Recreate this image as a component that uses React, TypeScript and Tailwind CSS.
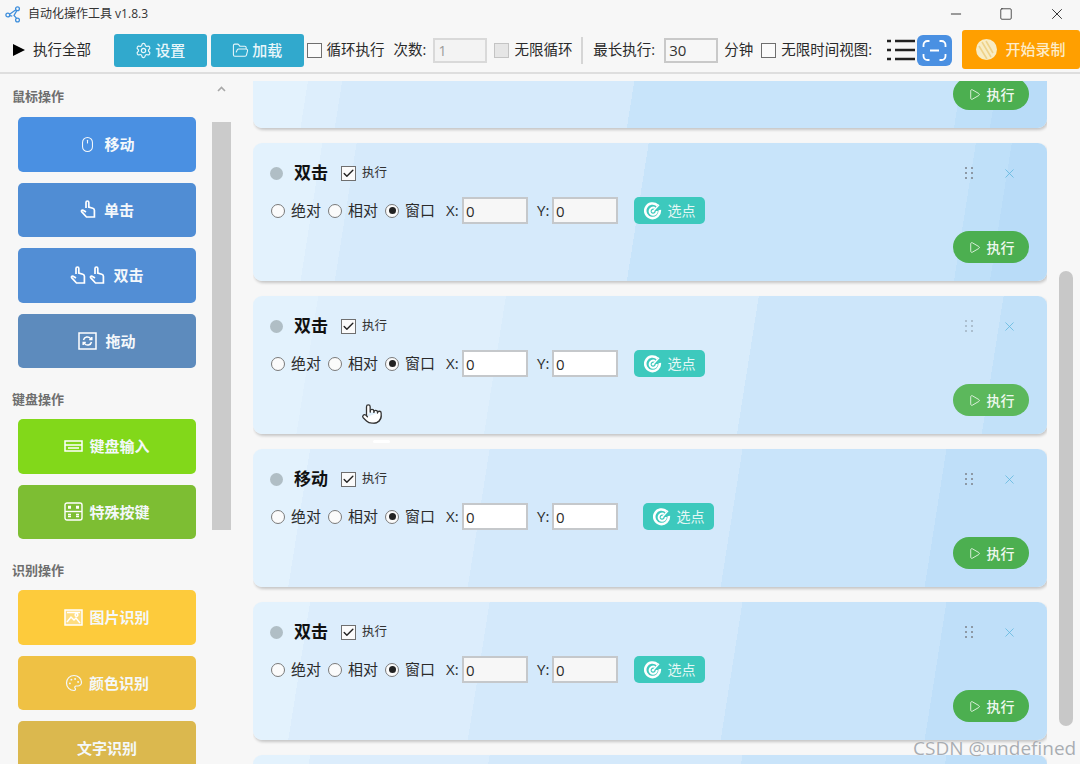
import type { ReactNode } from 'react'
import { Check, FolderOpen, Minus, Mouse, Palette, Play, Pointer, Settings, Square, X } from 'lucide-react'

const hand = (flip = false) => (
  <svg width="16" height="19" viewBox="0 0 16 19" fill="none" stroke="white" strokeWidth="1.7" className={flip ? '-scale-x-100' : ''}>
    <path d="M6 8V2.4a1.4 1.4 0 0 1 2.8 0V7l4 1.2c1 .3 1.6 1 1.6 2V17H6.5L1.6 11.6c-.6-.8.4-2 1.5-1.4L6 12" />
  </svg>
)

function KeyboardIcon() {
  return (
    <svg width="19" height="12" viewBox="0 0 19 12" fill="none" stroke="white" strokeWidth="1.5">
      <rect x="1" y="1" width="17" height="10" />
      <path d="M1 5h17M4 8h11" />
    </svg>
  )
}

function KeysIcon() {
  return (
    <svg width="19" height="19" viewBox="0 0 19 19" fill="none" stroke="white" strokeWidth="1.4">
      <rect x="1" y="1" width="17" height="17" rx="2" />
      <path d="M1 9.5h17" />
      <path d="M4 6h3M4 4.5h3M12 6h3M12 4.5h3M4 12.5h3M4 14.5h3M12 12.5h3M12 14.5h3" strokeWidth="1.3" />
    </svg>
  )
}

function ImageIcon() {
  return (
    <svg width="19" height="17" viewBox="0 0 19 17" fill="none" stroke="white" strokeWidth="1.5">
      <rect x="1" y="1" width="17" height="15" fill="white" fillOpacity="0.35" />
      <path d="M3 13l4-5 3 3 2-2 4 5M3 3.5h13" />
      <circle cx="12.5" cy="6" r="1.4" />
    </svg>
  )
}

function DragIcon() {
  return (
    <svg width="19" height="18" viewBox="0 0 19 18" fill="none" stroke="white" strokeWidth="1.5">
      <rect x="1" y="1" width="17" height="16" />
      <path d="M5.5 8a4 4 0 0 1 7-1.6l1 1M13.5 10a4 4 0 0 1-7 1.6l-1-1" />
      <path d="M13.8 5v2.6h-2.6M5.2 13v-2.6h2.6" />
    </svg>
  )
}

function TargetIcon() {
  return (
    <svg width="18" height="18" viewBox="0 0 18 18" fill="none" stroke="white">
      <path d="M13.5 3.4A7.3 7.3 0 1 0 15.8 8" strokeWidth="2.6" />
      <path d="M10.8 6a3.6 3.6 0 1 0 2 3" strokeWidth="2" />
      <circle cx="9" cy="9.2" r="1.2" fill="white" stroke="none" />
      <path d="M9 9.2l6-6.4" strokeWidth="1.5" />
    </svg>
  )
}

function Grip({ faded }: { faded?: boolean }) {
  return (
    <div className={`grid grid-cols-2 gap-x-[4px] gap-y-[3px] ${faded ? 'opacity-50' : ''}`}>
      {[0, 1, 2, 3, 4, 5].map(i => (
        <span key={i} className="h-[2px] w-[2px] bg-[#8d99a6]" />
      ))}
    </div>
  )
}

function CheckBox({ checked, disabled }: { checked?: boolean; disabled?: boolean }) {
  return (
    <span
      className={`flex h-[15px] w-[15px] shrink-0 items-center justify-center border ${
        disabled ? 'border-[#c4c4c4] bg-[#e6e6e6]' : 'border-[#6f6f6f] bg-[#fbfbfb]'
      }`}
    >
      {checked && <Check size={13} strokeWidth={2.6} className="text-[#222]" />}
    </span>
  )
}

function Radio({ checked }: { checked?: boolean }) {
  return (
    <span className="flex h-[14px] w-[14px] shrink-0 items-center justify-center rounded-full border border-[#7a7a7a] bg-[#fbfbfb]">
      {checked && <span className="h-[7px] w-[7px] rounded-full bg-[#222]" />}
    </span>
  )
}

function SideBtn({ color, icon, label, gap = 'gap-2' }: { color: string; icon?: ReactNode; label: string; gap?: string }) {
  return (
    <div className={`ml-[18px] flex h-[54.5px] w-[178px] shrink-0 items-center justify-center rounded-[5px] text-[15px] font-semibold text-[#f4f8fb] ${gap} ${color}`}>
      {icon}
      <span>{label}</span>
    </div>
  )
}

function SideTitle({ children, className }: { children: ReactNode; className: string }) {
  return <div className={`pl-[12px] text-[13px] leading-[18px] font-semibold text-[#6e6e6e] ${className}`}>{children}</div>
}

type CardProps = {
  title: string
  band: string
  shift?: boolean
  field?: string
  run?: string
  fade?: boolean
}

function ActionCard({ title, band, shift, field = 'bg-white', run = 'bg-[#4caf50]', fade }: CardProps) {
  return (
    <div className={`flex h-[138px] w-[794px] shrink-0 flex-col rounded-[9px] pr-[18px] pl-[17px] shadow-[1px_2px_3px_rgba(0,0,0,0.2)] ${band}`}>
      <div className="mt-[22px] flex h-[16px] items-center">
        <span className="h-[13px] w-[13px] rounded-full bg-[#b0bec5]" />
        <span className="ml-[11px] w-[47px] text-[17px] font-bold text-[#111]">{title}</span>
        <CheckBox checked />
        <span className="ml-[6px] text-[12.5px] text-[#333]">执行</span>
        <div className="mr-[12px] ml-auto flex items-center gap-[29px]">
          <Grip faded={fade} />
          <X size={15} strokeWidth={1.2} className="text-[#5cb6dc]" />
        </div>
      </div>
      <div className="mt-[16px] flex h-[27px] items-center text-[15px] text-[#2b2b2b]">
        <span className="ml-px"><Radio /></span>
        <span className="ml-[6px] w-[37px]">绝对</span>
        <Radio />
        <span className="ml-[6px] w-[37px]">相对</span>
        <Radio checked />
        <span className="ml-[6px] w-[41px]">窗口</span>
        <span className="w-[16px]">X:</span>
        <input readOnly value="0" className={`h-[27px] w-[66px] border-2 border-[#c5c8cb] pl-[2px] text-[15px] outline-none ${field}`} />
        <span className="ml-[9px] w-[15px]">Y:</span>
        <input readOnly value="0" className={`h-[27px] w-[66px] border-2 border-[#c5c8cb] pl-[2px] text-[15px] outline-none ${field}`} />
        <div className={`flex h-[27px] w-[71px] items-center justify-center gap-[6px] rounded-[5px] bg-[#3dc9bd] text-[14px] text-[#e4f7f5] ${shift ? 'ml-[25px]' : 'ml-[16px]'}`}>
          <TargetIcon />
          选点
        </div>
      </div>
      <div className="mt-[7px] flex justify-end">
        <div className={`flex h-[32px] w-[76px] items-center justify-center gap-[6px] rounded-full text-[14px] font-medium text-[#eef8ee] ${run}`}>
          <Play size={13} strokeWidth={1.6} />
          执行
        </div>
      </div>
    </div>
  )
}

const bandA = 'bg-[linear-gradient(99deg,#e3f2fd_8.5%,#ddeefc_8.5%,#ddeefc_12.7%,#d6eafb_12.7%,#d6eafb_48.5%,#c8e4fa_48.5%,#c8e4fa_88.6%,#bfe0f9_88.6%,#bfe0f9_93%,#b9dcf8_93%)]'
const bandB = 'bg-[linear-gradient(99deg,#e3f2fd_8%,#dfeffc_8%,#dfeffc_31%,#d9ecfb_31%,#d9ecfb_62%,#cde6fa_62%,#cde6fa_92%,#c2e1f9_92%)]'
const bandC = 'bg-[linear-gradient(99deg,#e3f2fd_7%,#dcedfc_7%,#dcedfc_29%,#d4e9fb_29%,#d4e9fb_60%,#c9e4fa_60%,#c9e4fa_85%,#bfdff9_85%)]'

export default function App() {
  return (
    <div className="relative flex h-[764px] w-[1080px] flex-col overflow-hidden bg-[#f7f7f7] [font-family:'Open_Sans','Noto_Sans_CJK_SC',sans-serif]">
      {/* title bar */}
      <div className="flex h-[28px] shrink-0 items-center pl-[5px] text-[12px] text-[#333]">
        <svg width="17" height="17" viewBox="0 0 17 17" fill="none" stroke="#3f8fdc" strokeWidth="1.3">
          <circle cx="2.8" cy="9" r="1.9" />
          <circle cx="12.5" cy="2.8" r="1.9" />
          <circle cx="12.5" cy="14" r="1.9" />
          <path d="M4.6 8.2l6.3-4.4M4.7 9.6l2.6.6M11.8 4.6L9 9.4l2.6 3" />
        </svg>
        <span className="ml-[6px]">自动化操作工具 v1.8.3</span>
        <div className="ml-auto flex items-center gap-[35px] pr-[14px] text-[#222]">
          <Minus size={16} strokeWidth={1.3} />
          <Square size={14} strokeWidth={1.3} />
          <X size={18} strokeWidth={1.2} />
        </div>
      </div>

      {/* toolbar */}
      <div className="flex h-[46px] shrink-0 items-center border-b-2 border-[#dedede] text-[14.5px] text-[#2a2a2a]">
        <span className="ml-[13px] h-0 w-0 border-y-[6.5px] border-l-[12px] border-y-transparent border-l-black" />
        <span className="ml-[8px] w-[81px]">执行全部</span>
        <div className="flex h-[33px] w-[93px] items-center justify-center gap-[3px] rounded-[3px] bg-[#31a9cd] text-[15px] font-medium text-[#e8f6fa]">
          <Settings size={17} strokeWidth={1.7} />
          设置
        </div>
        <div className="ml-[4px] flex h-[33px] w-[93px] items-center justify-center gap-[3px] rounded-[3px] bg-[#31a9cd] text-[15px] font-medium text-[#e8f6fa]">
          <FolderOpen size={17} strokeWidth={1.5} />
          加载
        </div>
        <span className="ml-[3px]"><CheckBox /></span>
        <span className="ml-[5px] w-[67px]">循环执行</span>
        <span className="w-[40px]">次数:</span>
        <input readOnly value="1" className="h-[25px] w-[54px] border-2 border-[#d9d9d9] bg-[#f3f3f3] pl-[3px] text-[14px] text-[#9a9a9a] outline-none" />
        <span className="ml-[7px]"><CheckBox disabled /></span>
        <span className="ml-[5px] w-[67px]">无限循环</span>
        <span className="h-[27px] w-[2px] bg-[#d5d5d5]" />
        <span className="ml-[10px] w-[71px]">最长执行:</span>
        <input readOnly value="30" className="h-[25px] w-[54px] border-2 border-[#c9c9c9] bg-[#f7f7f7] pl-[3px] text-[15px] text-[#333] outline-none" />
        <span className="ml-[6px] w-[37px]">分钟</span>
        <CheckBox />
        <span className="ml-[5px] w-[106px] whitespace-nowrap">无限时间视图:</span>
        <svg width="28" height="24" viewBox="0 0 28 24" fill="none" stroke="#222" strokeWidth="2.4" className="shrink-0">
          <path d="M8 3h20M8 12h20M8 21h20M0 3h4M0 12h4M0 21h4" />
        </svg>
        <div className="ml-[2px] flex h-[31px] w-[35px] shrink-0 items-center justify-center rounded-[6px] bg-[#4a90e2]">
          <svg width="25" height="23" viewBox="0 0 25 23" fill="none" stroke="white" strokeWidth="1.8">
            <path d="M1.5 8V6a4 4 0 0 1 4-4h2M17.5 2h2a4 4 0 0 1 4 4v2M23.5 15v2a4 4 0 0 1-4 4h-2M7.5 21h-2a4 4 0 0 1-4-4v-2M8 11.5h9" />
          </svg>
        </div>
        <div className="mb-[1px] ml-[10px] flex h-[39px] w-[118px] shrink-0 items-center justify-center gap-[8px] rounded-[3px] bg-[#ff9f00] text-[15px] font-medium text-[#fdecc8]">
          <svg width="21" height="21" viewBox="0 0 21 21">
            <circle cx="10.5" cy="10.5" r="10.5" fill="#f8ecc4" />
            <path d="M6 3l9 15M10 2l7 12M3 7l8 13" stroke="#eed28a" strokeWidth="1.6" />
          </svg>
          开始录制
        </div>
      </div>

      {/* body */}
      <div className="flex min-h-0 flex-1">
        <div className="flex w-[253px] shrink-0">
          <div className="flex w-[212px] shrink-0 flex-col overflow-hidden">
            <SideTitle className="mt-[13px] mb-[12px]">鼠标操作</SideTitle>
            <div className="flex flex-col gap-[11px]">
              <SideBtn color="bg-[#4a90e2]" icon={<Mouse size={17} strokeWidth={1.5} />} label="移动" />
              <SideBtn color="bg-[#508dd4]" icon={hand()} label="单击" />
              <SideBtn color="bg-[#528ed5]" icon={<span className="flex gap-[3px]">{hand()}{hand()}</span>} label="双击" />
              <SideBtn color="bg-[#5d8bbd]" icon={<DragIcon />} label="拖动" />
            </div>
            <SideTitle className="mt-[22px] mb-[11px]">键盘操作</SideTitle>
            <div className="flex flex-col gap-[11px]">
              <SideBtn color="bg-[#82d81a]" icon={<KeyboardIcon />} label="键盘输入" gap="gap-[6px]" />
              <SideBtn color="bg-[#7dbe33]" icon={<KeysIcon />} label="特殊按键" gap="gap-[6px]" />
            </div>
            <SideTitle className="mt-[22px] mb-[11px]">识别操作</SideTitle>
            <div className="flex flex-col gap-[11px]">
              <SideBtn color="bg-[#fdcb3c]" icon={<ImageIcon />} label="图片识别" gap="gap-[6px]" />
              <SideBtn color="bg-[#efc144]" icon={<Palette size={18} strokeWidth={1.6} />} label="颜色识别" gap="gap-[6px]" />
              <SideBtn color="bg-[#dbb84e]" label="文字识别" />
            </div>
          </div>
          <div className="flex w-[19px] shrink-0 flex-col items-center">
            <svg width="9" height="6" viewBox="0 0 9 6" fill="none" stroke="#a8a8a8" strokeWidth="1.6" className="mt-[12px]">
              <path d="M1 5l3.5-3.5L8 5" />
            </svg>
            <div className="mt-[30px] h-[408px] w-[19px] bg-[#cbcbcb]" />
          </div>
        </div>

        {/* cards */}
        <div className="mt-[7px] min-w-0 flex-1 overflow-hidden">
          <div className="mt-[-91px] flex flex-col gap-[15px]">
            <ActionCard title="双击" band={bandA} field="bg-[#f7f7f7]" />
            <ActionCard title="双击" band={bandA} field="bg-[#f7f7f7]" />
            <ActionCard title="双击" band={bandB} run="bg-[#5cb85c]" fade />
            <ActionCard title="移动" band={bandC} shift />
            <ActionCard title="双击" band={bandC} field="bg-[#f7f7f7]" />
            <ActionCard title="双击" band={bandC} />
          </div>
        </div>
        <div className="mt-[197px] mr-[7px] ml-[12px] h-[455px] w-[14px] shrink-0 rounded-[7px] bg-[#c8c8c8]" />
      </div>

      {/* hover cursor and drag hint */}
      <Pointer size={22} strokeWidth={1.4} fill="white" className="absolute top-[403px] left-[361px] text-[#333]" />
      <span className="absolute top-[440px] left-[373px] h-[3px] w-[17px] rounded-full bg-white" />
      <span className="absolute top-[734px] left-[913px] text-[19px] whitespace-nowrap text-[#a9adb2] [text-shadow:0_0_1px_white]">CSDN @undefined</span>
    </div>
  )
}
